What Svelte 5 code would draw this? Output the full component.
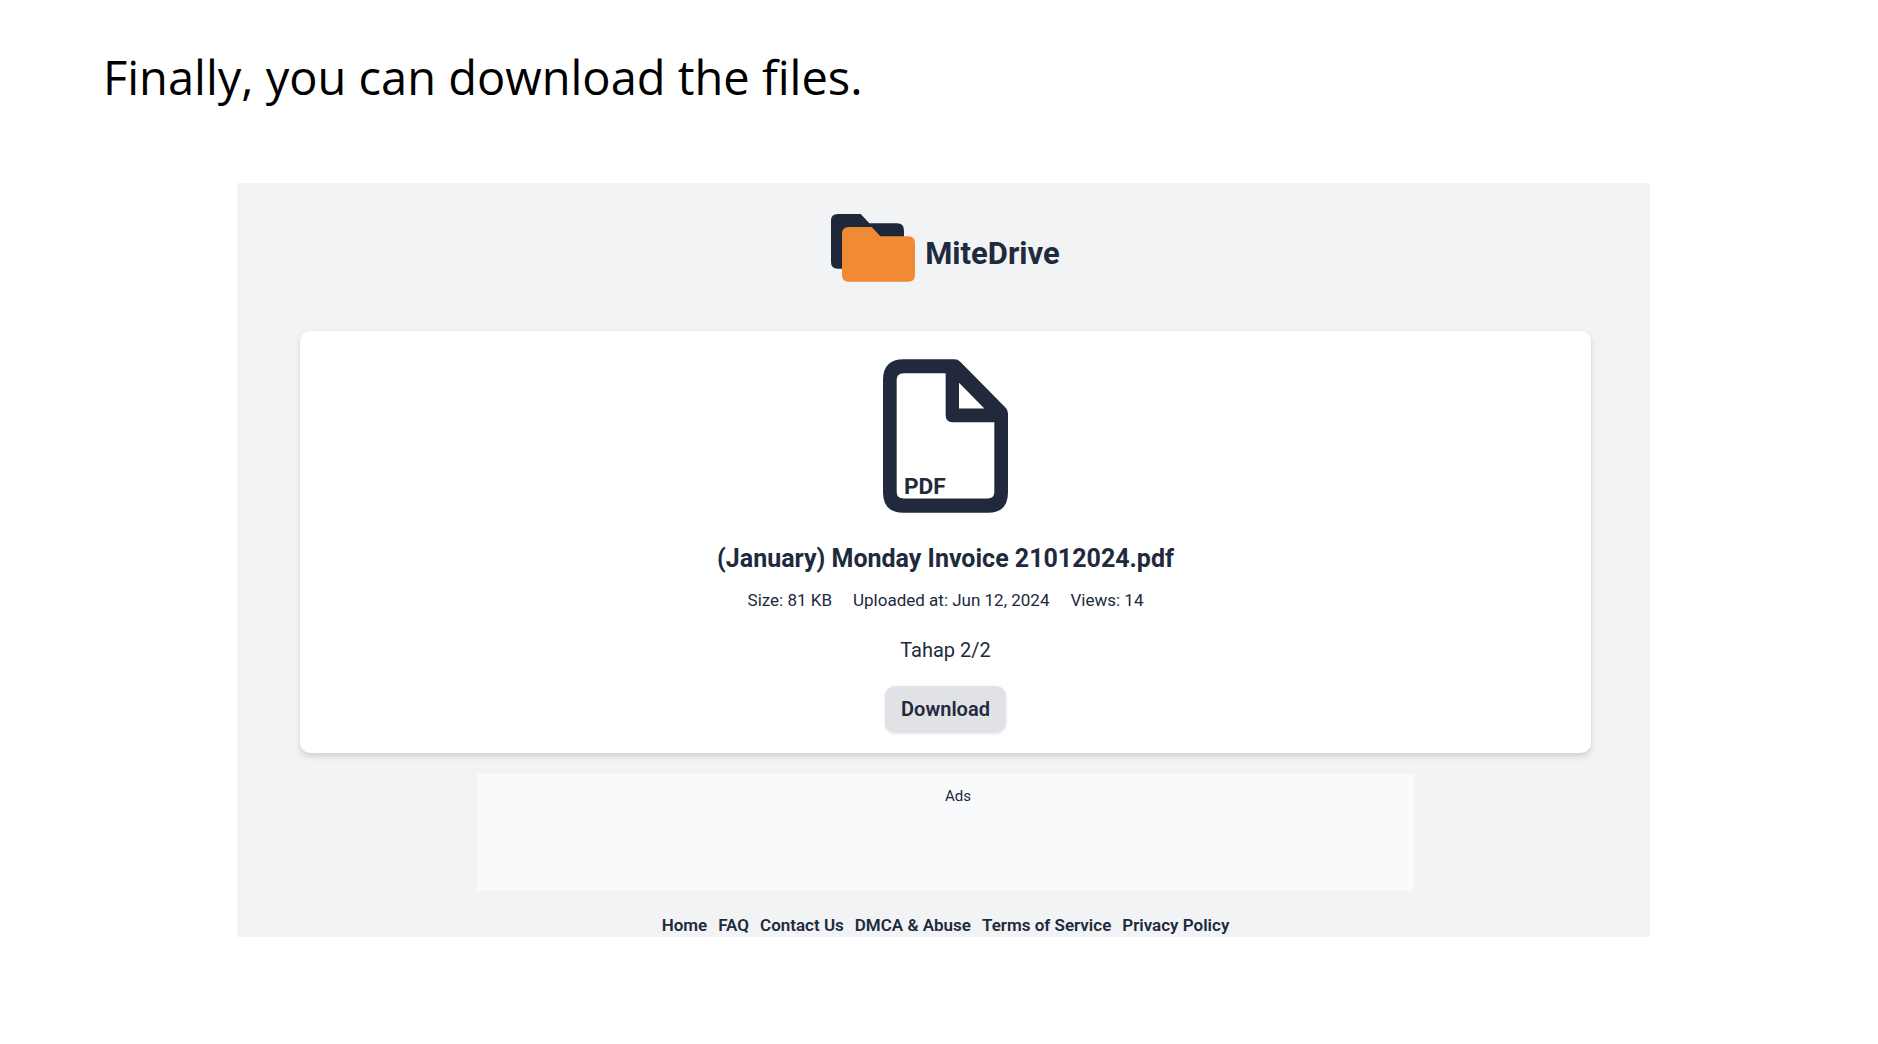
<script>
  const file = {
    name: "(January) Monday Invoice 21012024.pdf",
    type: "PDF",
    details: ["Size: 81 KB", "Uploaded at: Jun 12, 2024", "Views: 14"]
  };

  const links = [
    "Home",
    "FAQ",
    "Contact Us",
    "DMCA & Abuse",
    "Terms of Service",
    "Privacy Policy"
  ];
</script>

<div class="page">
  <h1>Finally, you can download the files.</h1>

  <div class="site">
    <header>
      <svg class="logo" viewBox="0 0 252 204" aria-hidden="true">
        <path
          fill="#1f273a"
          d="M20 0H89L115 28H198Q219 28 219 50V164H20Q0 164 0 144V20Q0 0 20 0Z"
        />
        <path
          fill="#f08a34"
          d="M53 39H122L148 67H232Q252 67 252 87V183Q252 203 232 203H53Q33 203 33 183V59Q33 39 53 39Z"
        />
      </svg>
      <span class="brand">MiteDrive</span>
    </header>

    <main>
      <svg class="fileIcon" viewBox="0 0 375 461" role="img" aria-label="PDF file">
        <path
          fill="#202a3c"
          fill-rule="evenodd"
          d="M62 0H215Q224 0 231 7L368 146Q375 153 375 163V400Q375 461 315 461H62Q0 461 0 400V62Q0 0 62 0ZM62 42Q41 42 41 62V398Q41 418 62 418H314Q334 418 334 398V189H208Q188 189 188 169V42ZM228 71V148H304Z"
        />
        <text x="63" y="405">{file.type}</text>
      </svg>
      <h2>{file.name}</h2>
      <div class="details">
        {#each file.details as detail}
          <span>{detail}</span>
        {/each}
      </div>
      <p>Tahap 2/2</p>
      <button type="button">Download</button>
    </main>

    <aside>Ads</aside>

    <nav>
      {#each links as link}
        <a href="#top">{link}</a>
      {/each}
    </nav>
  </div>
</div>

<style>
  :global(body) {
    background: #ffffff;
  }
  .page {
    padding: 47px 228px 107px 237px;
    font-family: Roboto, "Liberation Sans", sans-serif;
    color: #202a3c;
  }
  h1 {
    margin: 0 0 76px -134px;
    font-family: "Open Sans", "Noto Sans", sans-serif;
    font-size: 47px;
    font-weight: 400;
    line-height: 60px;
    color: #000000;
  }
  .site {
    display: flex;
    flex-direction: column;
    padding: 31px 59px 0 63px;
    background: #f2f3f5;
  }
  header {
    display: flex;
    justify-content: center;
    align-items: flex-end;
    gap: 10px;
    margin-bottom: 49px;
  }
  .logo {
    width: 84px;
    height: 68px;
  }
  .brand {
    font-size: 31px;
    font-weight: 700;
    line-height: 56px;
  }
  main {
    display: flex;
    flex-direction: column;
    align-items: center;
    padding: 28px 20px 20px;
    border-radius: 10px;
    background: #ffffff;
    box-shadow: 0 4px 7px rgba(0, 0, 0, 0.1), 0 2px 4px rgba(0, 0, 0, 0.06);
  }
  .fileIcon {
    width: 125px;
    height: 154px;
  }
  .fileIcon text {
    fill: #202a3c;
    font-size: 68px;
    font-weight: 700;
  }
  h2 {
    margin: 28px 0 9px;
    font-size: 25px;
    font-weight: 700;
    line-height: 36px;
  }
  .details {
    display: flex;
    gap: 21px;
    font-size: 17px;
    line-height: 28px;
  }
  p {
    margin: 22px 0;
    font-size: 20px;
    line-height: 28px;
  }
  button {
    padding: 0 16px;
    border: 0;
    border-radius: 10px;
    background: #e1e2e6;
    box-shadow: 0 1px 3px rgba(0, 0, 0, 0.1);
    color: inherit;
    font-family: inherit;
    font-size: 20px;
    font-weight: 600;
    line-height: 47px;
  }
  aside {
    box-sizing: border-box;
    align-self: center;
    width: 100%;
    max-width: 937px;
    min-height: 117px;
    margin: 21px 0 23px;
    padding: 10px 0 0 468px;
    background: #f9fafc;
    font-size: 15px;
    line-height: 24px;
  }
  nav {
    display: flex;
    justify-content: center;
    gap: 11px;
    font-size: 17px;
    font-weight: 600;
    line-height: 23px;
  }
  a {
    color: inherit;
    text-decoration: none;
  }
</style>
